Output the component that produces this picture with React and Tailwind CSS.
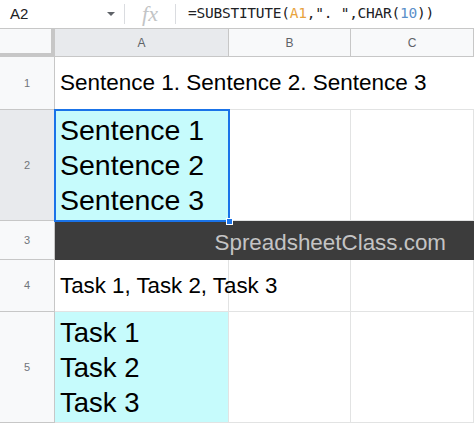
import React from "react";

const FONT = { fontFamily: '"Liberation Sans", Arial, sans-serif' };

const cols = ["A", "B", "C"];

// Row header cell on the left edge
const RowHead = ({ n, active }) => (
  <div
    className={`flex items-center justify-center border-r border-b border-[#c7c7c7] text-[11px] text-[#70757a] ${
      active ? "bg-[#e8eaed]" : "bg-[#f8f9fa]"
    }`}
  >
    {n}
  </div>
);

const Cell = ({ children, className = "" }) => (
  <div className={`flex items-center border-r border-b border-[#e2e3e3] pl-[5px] text-black ${className}`}>
    {children}
  </div>
);

const App = () => {
  return (
    <div className="w-[474px] h-[425px] overflow-hidden bg-white" style={FONT}>
      {/* Formula bar */}
      <div className="flex items-center h-[29px] border-b border-[#c7c7c7] bg-white">
        <div className="w-[104px] pl-[10px] text-[15px] text-[#202124]">A2</div>
        <svg width="10" height="6" viewBox="0 0 10 6" className="ml-[2px]">
          <path d="M1 1h8L5 5z" fill="#5f6368" />
        </svg>
        <div className="ml-[8px] w-px h-[20px] bg-[#dadce0]" />
        <div
          className="w-[50px] text-center text-[22px] italic text-[#c2c4c6] leading-none"
          style={{ fontFamily: '"Liberation Serif", serif' }}
        >
          fx
        </div>
        <div className="w-px h-[20px] bg-[#dadce0]" />
        <div
          className="pl-[12px] text-[14.5px] text-[#202124] tracking-[-0.25px]"
          style={{ fontFamily: '"DejaVu Sans Mono", monospace' }}
        >
          =SUBSTITUTE(<span className="text-[#e8a33d]">A1</span>,". ",CHAR(
          <span className="text-[#5b8fc9]">10</span>))
        </div>
      </div>

      {/* Grid */}
      <div className="relative grid grid-cols-[55px_174px_122px_1fr] grid-rows-[28px_53px_111px_39px_52px_111px]">
        {/* header row */}
        <div className="bg-[#f8f9fa] border-r-[4px] border-b-[4px] border-[#c7c7c7]" />
        {cols.map((c) => (
          <div
            key={c}
            className={`flex items-center justify-center border-r border-b border-[#c7c7c7] text-[12px] text-[#5f6368] ${
              c === "A" ? "bg-[#e8eaed]" : "bg-[#f8f9fa]"
            }`}
          >
            {c}
          </div>
        ))}

        {/* row 1 */}
        <RowHead n={1} />
        <div className="col-span-3 flex items-center border-b border-[#e2e3e3] pl-[5px] text-[22.5px] text-black whitespace-nowrap">
          Sentence 1. Sentence 2. Sentence 3
        </div>

        {/* row 2 */}
        <RowHead n={2} active />
        <div className="relative flex items-center bg-[#c6fbfc] pl-[5px] text-[28.5px] leading-[35px] text-black outline outline-2 -outline-offset-1 outline-[#1a73e8] z-10">
          <div>
            Sentence 1
            <br />
            Sentence 2
            <br />
            Sentence 3
          </div>
          <span className="absolute right-[-4px] bottom-[-4px] w-[7px] h-[7px] bg-[#1a73e8] border border-white" />
        </div>
        <Cell />
        <Cell />

        {/* row 3 */}
        <RowHead n={3} />
        <div className="col-span-3 flex items-center justify-end bg-[#3c3c3c] pr-[28px] pt-[4px] text-[22.4px] text-[#c4c4c4]">
          SpreadsheetClass.com
        </div>

        {/* row 4 */}
        <RowHead n={4} />
        <Cell className="text-[22.3px] whitespace-nowrap overflow-visible">Task 1, Task 2, Task 3</Cell>
        <Cell />
        <Cell />

        {/* row 5 */}
        <RowHead n={5} />
        <Cell className="bg-[#c6fbfc] text-[27.5px] leading-[35px]">
          <div>
            Task 1
            <br />
            Task 2
            <br />
            Task 3
          </div>
        </Cell>
        <Cell />
        <Cell />
      </div>
    </div>
  );
};

export default App;
